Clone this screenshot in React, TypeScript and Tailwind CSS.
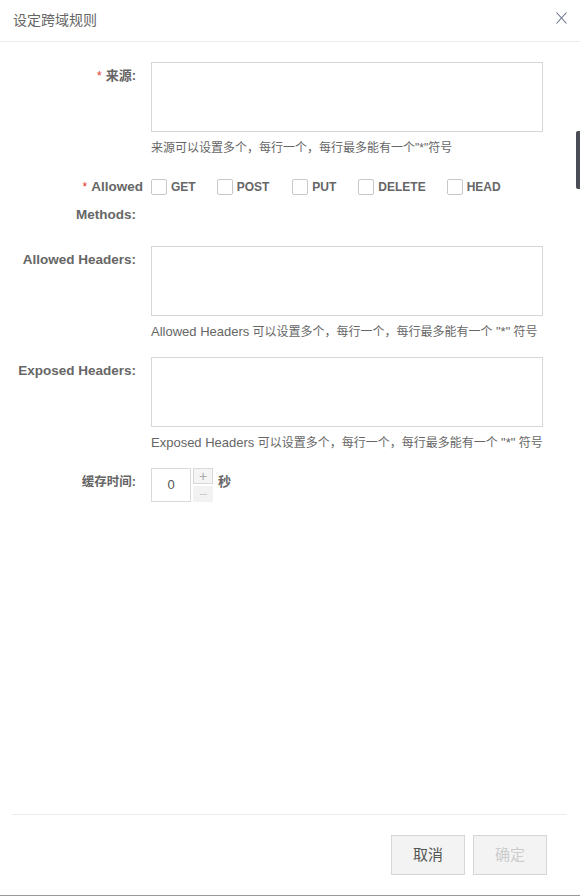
import React from "react";

const FONT = { fontFamily: '"Liberation Sans", "Noto Sans CJK SC", sans-serif' };

function Star() {
  return <span className="text-[#e5352b] text-[12px] font-normal mr-[4px]">*</span>;
}

function Label({ children, size = "text-[13px]" }: { children: React.ReactNode; size?: string }) {
  return (
    <div className={`w-[136px] shrink-0 text-right ${size} font-bold leading-[28px] text-[#666]`}>
      {children}
    </div>
  );
}

function Help({ children }: { children: React.ReactNode }) {
  return <div className="mt-[9px] text-[12px] leading-[14px] text-[#666]">{children}</div>;
}

function Area() {
  return (
    <textarea className="block w-[392px] h-[70px] border border-[#d6d6d6] bg-white resize-none outline-none" />
  );
}

function Check({ label, mr }: { label: string; mr: string }) {
  return (
    <label className={`flex items-center ${mr}`}>
      <span className="w-[16px] h-[16px] border border-[#c8c8c8] rounded-[2px] bg-white" />
      <span className="ml-[4px] text-[12px] font-bold text-[#666]">{label}</span>
    </label>
  );
}

export default function App() {
  return (
    <div style={FONT} className="relative w-[580px] h-[896px] flex flex-col bg-white border-b border-[#999]">
      {/* Header */}
      <div className="h-[42px] shrink-0 border-b border-[#ebebeb] flex items-center justify-between pl-[13px] pr-[13px]">
        <span className="text-[14px] text-[#666]">设定跨域规则</span>
        <svg width="11" height="12" viewBox="0 0 11 12" className="mb-[5px]">
          <path d="M0.5 0.5 L10.5 11.5 M10.5 0.5 L0.5 11.5" stroke="#66708a" strokeWidth="1.1" fill="none" />
        </svg>
      </div>

      {/* Form */}
      <div className="flex-1 pt-[20px]">
        <div className="flex gap-[15px] mb-[18px]">
          <Label>
            <Star />来源:
          </Label>
          <div>
            <Area />
            <Help>来源可以设置多个，每行一个，每行最多能有一个"*"符号</Help>
          </div>
        </div>

        <div className="flex gap-[15px] mb-[17px]">
          <Label size="text-[13.5px]">
            <div className="mr-[-7px]">
              <Star />Allowed
            </div>
            <div>Methods:</div>
          </Label>
          <div className="flex items-center h-[28px]">
            <Check label="GET" mr="mr-[21px]" />
            <Check label="POST" mr="mr-[23px]" />
            <Check label="PUT" mr="mr-[22px]" />
            <Check label="DELETE" mr="mr-[21px]" />
            <Check label="HEAD" mr="" />
          </div>
        </div>

        <div className="flex gap-[15px] mb-[18px]">
          <Label size="text-[13.5px]">Allowed Headers:</Label>
          <div>
            <Area />
            <Help>
              <span className="text-[13px]">Allowed Headers</span> 可以设置多个，每行一个，每行最多能有一个{" "}
              <span className="text-[13px]">"*"</span> 符号
            </Help>
          </div>
        </div>

        <div className="flex gap-[15px] mb-[18px]">
          <Label size="text-[13.5px]">Exposed Headers:</Label>
          <div>
            <Area />
            <Help>
              <span className="text-[13px]">Exposed Headers</span> 可以设置多个，每行一个，每行最多能有一个{" "}
              <span className="text-[13px]">"*"</span> 符号
            </Help>
          </div>
        </div>

        <div className="flex gap-[15px]">
          <Label size="text-[12.5px]">缓存时间:</Label>
          <div className="flex items-start">
            <div className="w-[40px] h-[34px] border border-[#d9d9d9] flex items-center justify-center text-[13px] text-[#555]">
              0
            </div>
            <div className="ml-[2px] flex flex-col gap-[2px]">
              <div className="w-[20px] h-[16px] border border-[#d9d9d9] bg-[#f5f5f5] flex items-center justify-center text-[14px] leading-none text-[#aaa]">
                +
              </div>
              <div className="w-[20px] h-[16px] bg-[#f2f2f2] flex items-center justify-center text-[14px] leading-none text-[#ccc]">
                −
              </div>
            </div>
            <span className="ml-[5px] text-[13px] font-bold leading-[28px] text-[#666]">秒</span>
          </div>
        </div>
      </div>

      {/* Footer */}
      <div className="h-[81px] shrink-0 ml-[12px] mr-[13px] border-t border-[#ebebeb] pt-[20px] pr-[20px] flex justify-end gap-[8px]">
        <button className="w-[74px] h-[40px] border border-[#d6d6d6] bg-[#f3f3f3] text-[15px] text-[#555]">
          取消
        </button>
        <button className="w-[74px] h-[40px] border border-[#d6d6d6] bg-[#f3f3f3] text-[15px] text-[#ccc]">
          确定
        </button>
      </div>

      {/* scroll handle overlay */}
      <div className="absolute right-0 top-[131px] w-[4px] h-[58px] bg-[#4a4d55] rounded-l-[2px]" />
    </div>
  );
}
